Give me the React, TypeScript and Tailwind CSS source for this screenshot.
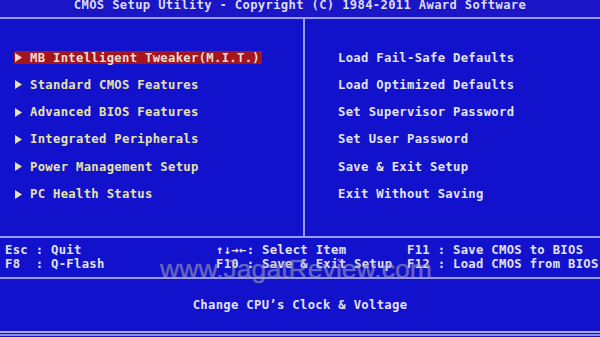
import React from "react";

const leftItems = [
  "MB Intelligent Tweaker(M.I.T.)",
  "Standard CMOS Features",
  "Advanced BIOS Features",
  "Integrated Peripherals",
  "Power Management Setup",
  "PC Health Status",
];

const rightItems = [
  "Load Fail-Safe Defaults",
  "Load Optimized Defaults",
  "Set Supervisor Password",
  "Set User Password",
  "Save & Exit Setup",
  "Exit Without Saving",
];

function Arrow({ color }: { color: string }) {
  return (
    <svg width="7" height="9" viewBox="0 0 7 9" className="shrink-0">
      <polygon points="0,0 7,4.5 0,9" fill={color} />
    </svg>
  );
}

export default function App() {
  return (
    <div
      className="relative w-[600px] h-[337px] overflow-hidden bg-[#1212cc] font-bold text-[12.2px] tracking-[0.33px] whitespace-pre"
      style={{ fontFamily: '"DejaVu Sans Mono", "Liberation Mono", monospace' }}
    >
      {/* Title */}
      <div className="h-[17px] bg-[#1a16c6] text-center text-[#dcdcf0] leading-[11px]">
        CMOS Setup Utility - Copyright (C) 1984-2011 Award Software
      </div>
      <div className="h-[2px] bg-[#9a9af0]" />

      {/* Main */}
      <div className="flex h-[217px]">
        <div className="w-[303px] pl-[14px] pt-[25px] flex flex-col">
          {leftItems.map((t, i) => (
            <div key={t} className="h-[27.3px] flex items-center">
              <div
                className={
                  "flex items-center h-[13px] pl-[1px] pr-[2px] " +
                  (i === 0 ? "bg-[#a3161e] text-[#eedcdc]" : "text-[#e8e4aa]")
                }
              >
                <Arrow color={i === 0 ? "#eedcdc" : "#e8e4aa"} />
                <span className="ml-[8px]">{t}</span>
              </div>
            </div>
          ))}
        </div>
        <div className="w-[2px] bg-[#9a9af0]" />
        <div className="flex-1 pl-[33px] pt-[25px] flex flex-col text-[#e4e4f2]">
          {rightItems.map((t) => (
            <div key={t} className="h-[27.3px] flex items-center">
              {t}
            </div>
          ))}
        </div>
      </div>
      <div className="h-[2px] bg-[#9a9af0]" />

      {/* Keys */}
      <div className="h-[39px] pt-[5px] pl-[5px] flex text-[#e2e2f4] leading-[14px]">
        <div className="w-[211px] flex flex-col">
          <div>Esc : Quit</div>
          <div>F8  : Q-Flash</div>
        </div>
        <div className="w-[191px] flex flex-col">
          <div>↑↓→←: Select Item</div>
          <div>F10 : Save & Exit Setup</div>
        </div>
        <div className="flex-1 flex flex-col">
          <div>F11 : Save CMOS to BIOS</div>
          <div>F12 : Load CMOS from BIOS</div>
        </div>
      </div>
      <div className="h-[2px] bg-[#9a9af0]" />

      {/* Help */}
      <div className="h-[52px] flex items-center justify-center text-[#e2e2f4]">
        Change CPU’s Clock & Voltage
      </div>
      <div className="h-[2px] bg-[#a8a8f4]" />
      <div className="h-[1px]" />
      <div className="h-[2px] bg-[#8c8cea]" />

      {/* Watermark */}
      <div
        className="absolute left-[160px] top-[254px] text-[26.6px] font-normal tracking-normal leading-[30px] text-[rgba(200,200,215,0.45)]"
        style={{ fontFamily: '"Liberation Sans", Arial, sans-serif', WebkitTextStroke: "0.6px rgba(120,120,140,0.6)" }}
      >
        www.JagatReview.com
      </div>
    </div>
  );
}
